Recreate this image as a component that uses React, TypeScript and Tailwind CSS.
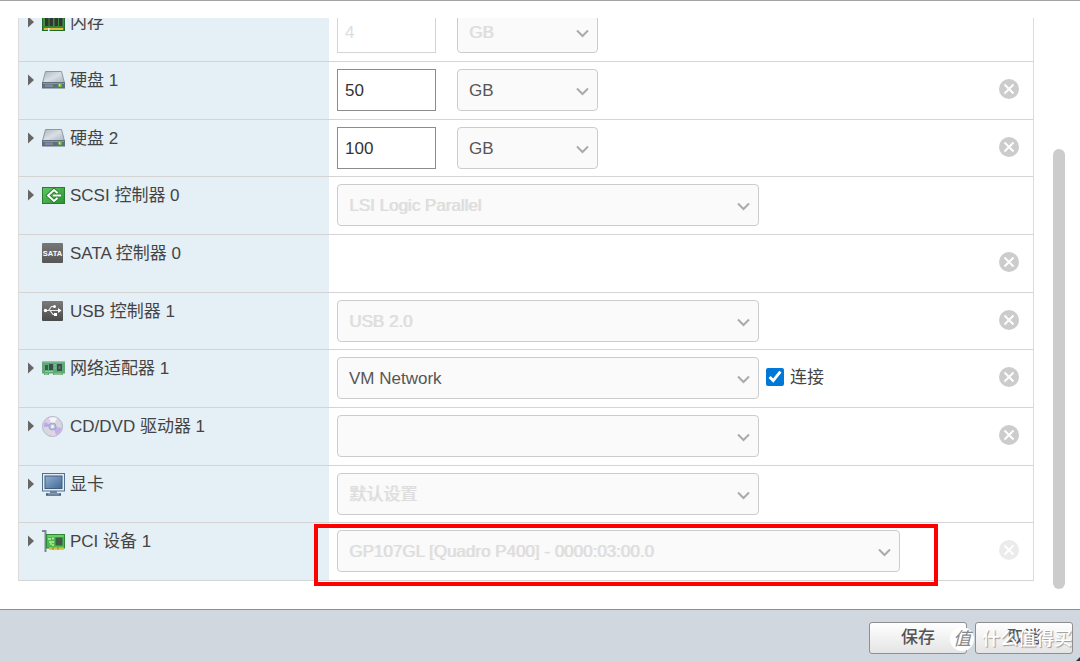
import React, { useState } from 'react';

function MemoryIcon() {
  return (
    <svg width="23" height="20" viewBox="0 0 23 20">
      <rect x="0.5" y="1.5" width="22" height="17" fill="#3f9142" stroke="#1f6b2b" />
      <rect x="3" y="3" width="3.500" height="11" fill="#333733" />
      <rect x="7.500" y="3" width="3.500" height="11" fill="#333733" />
      <rect x="12.500" y="3" width="3.500" height="11" fill="#333733" />
      <rect x="17" y="3" width="3.500" height="11" fill="#333733" />
      <path d="M1 15h21" stroke="#2f7a2c" />
      <path d="M2 17h19" stroke="#e9b93a" strokeWidth="2" />
      <path d="M6 16h1.500v3h-1.500z" fill="#e4eff6" />
    </svg>
  );
}

function DiskIcon() {
  return (
    <svg width="23" height="18" viewBox="0 0 23 18">
      <defs>
        <linearGradient id="diskTop" x1="0" y1="0" x2="1" y2="1">
          <stop offset="0" stopColor="#aab3bd" />
          <stop offset="0.5" stopColor="#d9dfe5" />
          <stop offset="1" stopColor="#a9b2bc" />
        </linearGradient>
      </defs>
      <path d="M3.5 0.5h16l3 11.500h-22z" fill="url(#diskTop)" stroke="#8e98a3" />
      <rect x="0" y="11" width="23" height="6.500" rx="0.5" fill="#5f6f7e" />
      <rect x="1" y="12" width="21" height="1" fill="#8997a4" />
      <rect x="3" y="13.500" width="8" height="2.500" fill="#7c8b99" />
      <circle cx="18" cy="14.500" r="1.800" fill="#7ad12f" />
      <circle cx="17.500" cy="14" r="0.700" fill="#e4ffc2" />
    </svg>
  );
}

function ScsiIcon() {
  return (
    <svg width="23" height="17" viewBox="0 0 23 17">
      <defs>
        <linearGradient id="scsiBg" x1="0" y1="0" x2="1" y2="1">
          <stop offset="0" stopColor="#63c766" />
          <stop offset="1" stopColor="#2a9132" />
        </linearGradient>
      </defs>
      <rect x="0.5" y="0.5" width="22" height="16" fill="url(#scsiBg)" stroke="#257f2c" />
      <path d="M15.500 6L12 3L6 8.500L12 14L15.500 11M19 8.500H11" fill="none" stroke="#237a2b" strokeWidth="3.600" />
      <path d="M15.500 6L12 3L6 8.500L12 14L15.500 11M19 8.500H11" fill="none" stroke="#fff" strokeWidth="2" />
    </svg>
  );
}

function SataIcon() {
  return (
    <svg width="21" height="20" viewBox="0 0 21 20">
      <defs>
        <linearGradient id="sataBg" x1="0" y1="0" x2="0" y2="1">
          <stop offset="0" stopColor="#777" />
          <stop offset="1" stopColor="#565656" />
        </linearGradient>
      </defs>
      <rect width="21" height="20" rx="1" fill="url(#sataBg)" />
      <text x="10.500" y="12.500" textAnchor="middle" fontSize="7.500" fontWeight="bold" fill="#fff" fontFamily="Liberation Sans, sans-serif">SATA</text>
    </svg>
  );
}

function UsbIcon() {
  return (
    <svg width="21" height="20" viewBox="0 0 21 20">
      <defs>
        <linearGradient id="usbBg" x1="0" y1="0" x2="0" y2="1">
          <stop offset="0" stopColor="#7a7a7a" />
          <stop offset="1" stopColor="#4a4a4a" />
        </linearGradient>
      </defs>
      <rect width="21" height="20" rx="1" fill="url(#usbBg)" />
      <path d="M3 9.500H17M6.500 9.500L9.500 5.500H12M8 9.500L11 13.500H13" fill="none" stroke="#e8e8e8" strokeWidth="1.200" />
      <path d="M16 7l3.500 2.500L16 12z" fill="#fff" />
      <circle cx="3.500" cy="9.500" r="1.700" fill="#fff" />
      <circle cx="12.500" cy="5.500" r="1.500" fill="#fff" />
      <rect x="12" y="12" width="3" height="3" fill="#fff" />
    </svg>
  );
}

function NetworkIcon() {
  return (
    <svg width="23" height="15" viewBox="0 0 23 15">
      <path d="M0 0.500h23v12h-2v1.500h-10v-1.500h-4v1.500h-5v-1.500h-2z" fill="#5fa878" />
      <path d="M0 1h23" stroke="#89c49b" />
      <rect x="3" y="4" width="3" height="5" fill="#35614b" />
      <rect x="7" y="3" width="4" height="6" fill="#35504b" />
      <rect x="15" y="3" width="5" height="7" fill="#35504b" />
      <rect x="16.500" y="5" width="2" height="3" fill="#57756b" />
      <path d="M3 13h3M12 13h8" stroke="#bfcf8c" />
      <path d="M12 4h2M12 7h2M3 10.500h8" stroke="#8fcaa1" />
    </svg>
  );
}

function DiscIcon() {
  return (
    <svg width="21" height="21" viewBox="0 0 21 21">
      <circle cx="10.500" cy="10.500" r="10" fill="#d6d7e1" stroke="#b4b5c2" />
      <path d="M10.500 10.500L2 6A10 10 0 0 1 7 2z" fill="#dccbe9" />
      <path d="M10.500 10.500L7 2A10 10 0 0 1 15 2z" fill="#f3f3f8" />
      <path d="M10.500 10.500L20 12A10 10 0 0 1 14 19z" fill="#c5b1ea" />
      <path d="M10.500 10.500L14 19A10 10 0 0 1 10 20z" fill="#e8d3e4" />
      <path d="M10.500 10.500L3 6A9 9 0 0 0 2 11z" fill="#b9a9e6" />
      <circle cx="10.500" cy="10.500" r="3.500" fill="#b9c3dc" stroke="#9aa6c8" />
      <circle cx="10.500" cy="10.500" r="1.500" fill="#f4f7fa" />
    </svg>
  );
}

function DisplayIcon() {
  return (
    <svg width="23" height="23" viewBox="0 0 23 23">
      <defs>
        <linearGradient id="screenBg" x1="0" y1="0" x2="1" y2="1">
          <stop offset="0" stopColor="#8fb0d0" />
          <stop offset="1" stopColor="#426a97" />
        </linearGradient>
      </defs>
      <rect x="0.500" y="0.500" width="22" height="17.500" fill="#e3eaf1" stroke="#55718f" />
      <rect x="3" y="3" width="17" height="12.500" fill="url(#screenBg)" stroke="#3f5f82" />
      <path d="M8 18h7v2h-7z" fill="#6d8298" />
      <path d="M4 21.500h15" stroke="#3e5f80" strokeWidth="2.500" />
      <path d="M6 21h11" stroke="#9fb2c5" />
    </svg>
  );
}

function PciIcon() {
  return (
    <svg width="23" height="23" viewBox="0 0 23 23">
      <path d="M0 1h3.500v21" fill="none" stroke="#7d859c" strokeWidth="2" />
      <rect x="4.500" y="4.500" width="18" height="13.500" fill="#4fb84f" stroke="#2c8a35" />
      <path d="M5.500 6h16" stroke="#8ee07f" />
      <rect x="14" y="8" width="6" height="7" fill="#4b5550" stroke="#2d6b38" />
      <path d="M6 9h3M7 12h2v3M10 8.500h2M10 12h2M10 15h2" stroke="#b6efa5" strokeWidth="1.300" fill="none" />
      <path d="M7 18.500h15" stroke="#d8bd39" strokeWidth="2.500" />
      <path d="M11 17v3M16 17v3" stroke="#8c8b28" />
    </svg>
  );
}

type SelectProps = {
  label: string;
  options: string[];
  width: string;
  disabled?: boolean;
};

function Select({ label, options, width, disabled }: SelectProps) {
  return (
    <div className={`relative ${width}`}>
      <select
        aria-label={label}
        disabled={disabled}
        className="block h-[42px] w-full appearance-none rounded border border-[#ccc] bg-[#fafafa] pl-[11px] pr-8 pt-0.5 text-[#565656] disabled:text-[#ddd] disabled:opacity-100 disabled:text-shadow-[1px_0_0_#e4e4e4]"
      >
        {options.map((o) => (
          <option key={o}>{o}</option>
        ))}
      </select>
      <svg className="pointer-events-none absolute right-[9px] top-[18px]" width="13" height="9" viewBox="0 0 13 9">
        <path d="M1 1.500L6.500 7L12 1.500" fill="none" stroke="#aaa" strokeWidth="2" />
      </svg>
    </div>
  );
}

type SizeProps = {
  label: string;
  value: string;
  disabled?: boolean;
};

function SizeField({ label, value, disabled }: SizeProps) {
  return (
    <>
      <input
        type="text"
        aria-label={label}
        defaultValue={value}
        disabled={disabled}
        className="mr-[21px] h-[42px] w-[99px] border border-[#8c8c8c] bg-white px-[7px] pt-0.5 text-[#333] disabled:border-[#d4d4d4] disabled:text-[#ddd]"
      />
      <Select label={`${label} 单位`} options={['GB', 'MB', 'TB']} width="w-[141px]" disabled={disabled} />
    </>
  );
}

type RowProps = {
  icon: React.ReactNode;
  name: string;
  expandable?: boolean;
  removable?: boolean;
  faded?: boolean;
  children?: React.ReactNode;
};

function Row({ icon, name, expandable = true, removable, faded, children }: RowProps) {
  return (
    <div className="flex h-[58px] border-b border-[#d4d4d4] nth-[3n]:h-[57px]">
      <div className="w-[310px] shrink-0 bg-[#e4eff6] pl-[9px] pt-1.5">
        <div className="flex h-6 items-center">
          {expandable ? (
            <button type="button" aria-label={`展开 ${name}`} className="w-[14px]">
              <svg width="6" height="12" viewBox="0 0 6 12">
                <path d="M0 0.500L6 6L0 11.500z" fill="#666" />
              </svg>
            </button>
          ) : (
            <span className="w-[14px]" />
          )}
          <span className="flex w-7 items-center">{icon}</span>
          <span className="whitespace-nowrap pt-0.5 leading-6">{name}</span>
        </div>
      </div>
      <div className="relative flex flex-1 items-start pl-2 pt-[7px]">{children}</div>
      {removable && (
        <button type="button" aria-label={`移除 ${name}`} className="mr-[14px] mt-[17px] h-5 w-5 shrink-0">
          <svg width="20" height="20" viewBox="0 0 20 20">
            <circle cx="10" cy="10" r="10" fill={faded ? '#ebebeb' : '#ccc'} />
            <path d="M5.500 5.500L14.500 14.500M14.500 5.500L5.500 14.500" stroke="#fff" strokeWidth="2" />
          </svg>
        </button>
      )}
    </div>
  );
}

export default function App() {
  const [connected, setConnected] = useState(true);

  return (
    <div className="flex h-screen flex-col overflow-hidden border-t border-[#a3a3a3] bg-white font-['Liberation_Sans','Noto_Sans_CJK_SC',sans-serif] text-[17px] text-[#444]">
      <main className="flex min-h-0 flex-1 pl-[18px] pr-[15px] pt-[17px]">
        {/* Hardware list, scrolled so that the memory row is cut at the top */}
        <div className="min-w-0 flex-1 overflow-hidden">
          <div className="-mt-[14px] border-x border-[#dcdcdc]">
            <Row icon={<MemoryIcon />} name="内存">
              <SizeField label="内存" value="4" disabled />
            </Row>
            <Row icon={<DiskIcon />} name="硬盘 1" removable>
              <SizeField label="硬盘 1" value="50" />
            </Row>
            <Row icon={<DiskIcon />} name="硬盘 2" removable>
              <SizeField label="硬盘 2" value="100" />
            </Row>
            <Row icon={<ScsiIcon />} name="SCSI 控制器 0">
              <Select label="SCSI 控制器 0" options={['LSI Logic Parallel']} width="w-[422px]" disabled />
            </Row>
            <Row icon={<SataIcon />} name="SATA 控制器 0" expandable={false} removable />
            <Row icon={<UsbIcon />} name="USB 控制器 1" expandable={false} removable>
              <Select label="USB 控制器 1" options={['USB 2.0']} width="w-[422px]" disabled />
            </Row>
            <Row icon={<NetworkIcon />} name="网络适配器 1" removable>
              <Select label="网络适配器 1" options={['VM Network']} width="w-[422px]" />
              <label className="ml-[7px] flex h-10 items-center gap-1.5">
                <input
                  type="checkbox"
                  checked={connected}
                  onChange={(e) => setConnected(e.target.checked)}
                  className="h-[18px] w-[18px] accent-[#0078d7]"
                />
                <span className="pt-0.5">连接</span>
              </label>
            </Row>
            <Row icon={<DiscIcon />} name="CD/DVD 驱动器 1" removable>
              <Select label="CD/DVD 驱动器 1" options={['']} width="w-[422px]" />
            </Row>
            <Row icon={<DisplayIcon />} name="显卡">
              <Select label="显卡" options={['默认设置']} width="w-[422px]" disabled />
            </Row>
            <Row icon={<PciIcon />} name="PCI 设备 1" removable faded>
              <Select label="PCI 设备 1" options={['GP107GL [Quadro P400] - 0000:03:00.0']} width="w-[563px]" disabled />
              {/* Highlight frame */}
              <div className="pointer-events-none absolute -left-[15px] top-px h-[62px] w-[624px] border-4 border-[#f00]" />
            </Row>
          </div>
        </div>

        {/* Scrollbar */}
        <div className="ml-[19px] flex w-3 flex-col pb-5 pt-[131px]">
          <div className="flex-1 rounded-full bg-[#ccc]" />
        </div>
      </main>

      <footer className="relative flex h-[52px] shrink-0 items-center justify-end gap-2 border-t border-[#8f8f8f] bg-[#d0d7df] pb-px pr-[7px] pt-1.5">
        <button type="button" className="h-8 w-[98px] rounded-[3px] border border-[#8f8f8f] bg-gradient-to-b from-white to-[#e4e4e4] font-medium text-[#555]">
          保存
        </button>
        <button type="button" className="h-8 w-[98px] rounded-[3px] border border-[#8f8f8f] bg-gradient-to-b from-white to-[#e4e4e4] font-medium text-[#555]">
          取消
        </button>

        {/* Watermark */}
        <div className="pointer-events-none absolute right-2 top-[17px] flex h-6 items-center gap-2 text-lg text-white">
          <span className="flex h-6 w-6 items-center justify-center rounded-full bg-white italic text-[#888]">值</span>
          <span className="whitespace-nowrap font-medium text-shadow-[1px_1px_1px_#999]">什么值得买</span>
        </div>
        <svg className="absolute bottom-0 right-0" width="4" height="4" viewBox="0 0 4 4">
          <path d="M4 0V4H0z" fill="#333" />
        </svg>
      </footer>
    </div>
  );
}
